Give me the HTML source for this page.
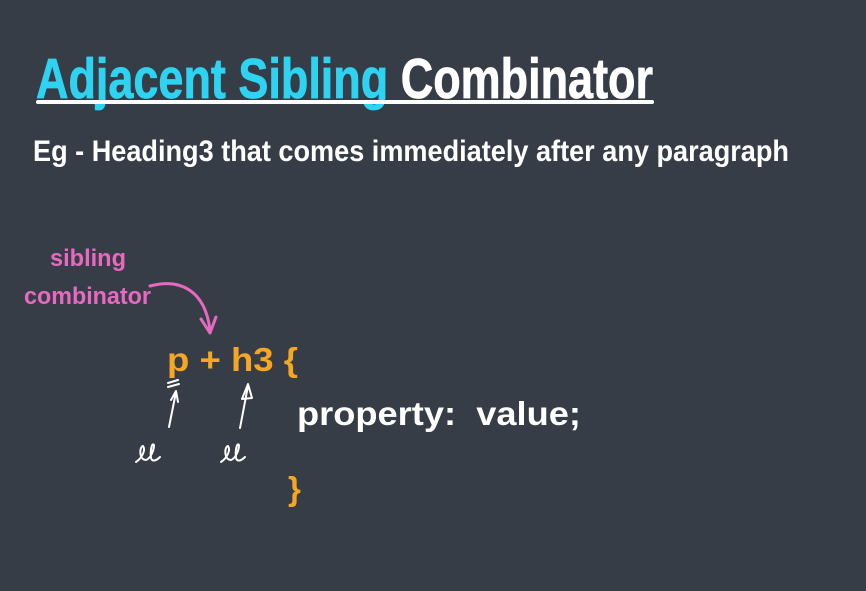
<!DOCTYPE html>
<html><head><meta charset="utf-8"><style>
html,body{margin:0;padding:0;background:#363d47;}
svg{display:block}
</style></head><body>
<svg width="866" height="591" viewBox="0 0 866 591" xmlns="http://www.w3.org/2000/svg">
<rect width="866" height="591" fill="#363d47"/>
<text x="36" y="98" font-family="Liberation Sans, sans-serif" font-weight="bold" font-size="57" textLength="617" lengthAdjust="spacingAndGlyphs" stroke-width="0.8"><tspan fill="#2fd3f2" stroke="#2fd3f2">Adjacent Sibling</tspan><tspan fill="#ffffff" stroke="#ffffff"> Combinator</tspan></text>
<rect x="36" y="100" width="618" height="4" rx="2" fill="#ffffff"/>
<text x="33" y="161" font-family="Liberation Sans, sans-serif" font-weight="bold" font-size="30" fill="#ffffff" textLength="756" lengthAdjust="spacingAndGlyphs">Eg - Heading3 that comes immediately after any paragraph</text>
<text x="50" y="266" font-family="Liberation Sans, sans-serif" font-weight="bold" font-size="24" fill="#e76ac0" textLength="76" lengthAdjust="spacingAndGlyphs">sibling</text>
<text x="24" y="304" font-family="Liberation Sans, sans-serif" font-weight="bold" font-size="24" fill="#e76ac0" textLength="127" lengthAdjust="spacingAndGlyphs">combinator</text>
<path d="M150 286 C180 278 205 290 210 330" fill="none" stroke="#e76ac0" stroke-width="3" stroke-linecap="round"/>
<path d="M201 319 L210 333 L216 317" fill="none" stroke="#e76ac0" stroke-width="3" stroke-linecap="round" stroke-linejoin="round"/>
<text x="167" y="371" font-family="Liberation Sans, sans-serif" font-weight="bold" font-size="33" fill="#f5a623" textLength="131" lengthAdjust="spacingAndGlyphs">p + h3 {</text>
<text x="297" y="425" font-family="Liberation Sans, sans-serif" font-weight="bold" font-size="33" fill="#ffffff" textLength="284" lengthAdjust="spacingAndGlyphs">property:&#160;&#160;value;</text>
<text x="288" y="500" font-family="Liberation Sans, sans-serif" font-weight="bold" font-size="33" fill="#f5a623">}</text>
<g fill="none" stroke="#ffffff" stroke-width="2" stroke-linecap="round" stroke-linejoin="round">
<path d="M169 427 L176 392"/><path d="M171 400 L176 391 L178 402"/>
<path d="M168 383 L178 380 M168 387 L179 384"/>
<path d="M240 428 L248 386"/><path d="M242 399 L248 384 L252 398 Z"/>
<path d="M136 462 C142 458 146 450 143 446 C139 447 139 460 146 460 C151 458 154 450 154 445 C152 442 150 450 151 458 C152 462 156 461 160 457"/>
<path d="M221 462 C227 458 231 450 228 446 C224 447 224 460 231 460 C236 458 239 450 239 445 C237 442 235 450 236 458 C237 462 241 461 245 457"/>
</g>
</svg>
</body></html>
